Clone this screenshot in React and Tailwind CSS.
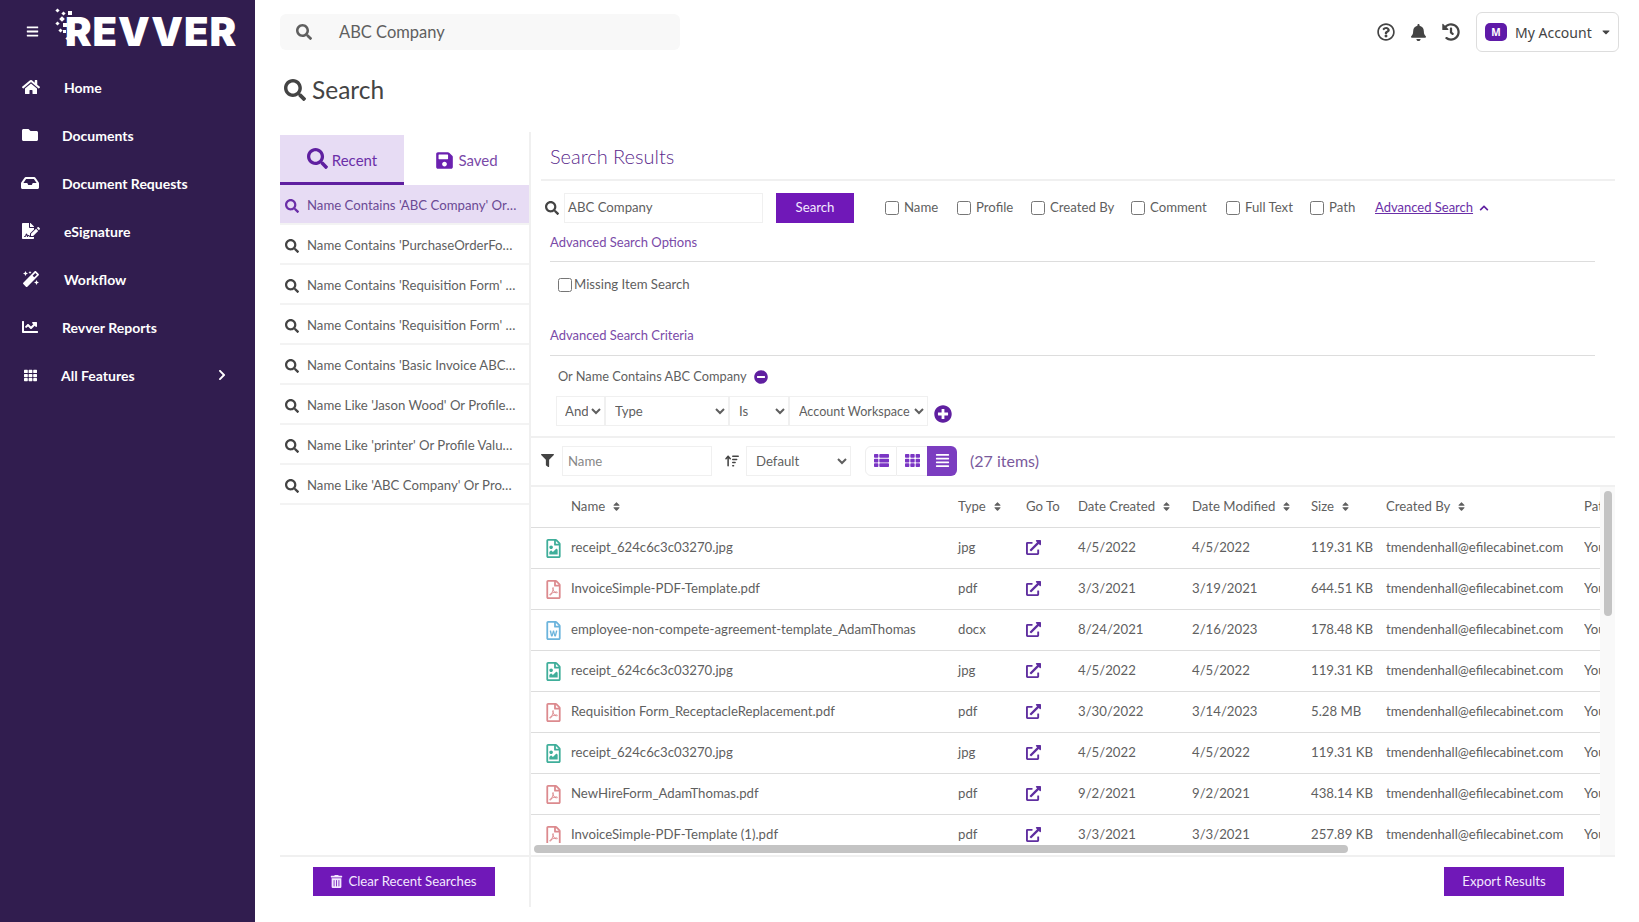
import { FaBars, FaHome, FaFolder, FaInbox, FaFileSignature, FaMagic, FaChartLine, FaTh, FaChevronRight, FaChevronUp, FaSearch, FaSave, FaTrashAlt, FaMinusCircle, FaPlusCircle, FaFilter, FaThList, FaAlignJustify, FaExternalLinkAlt, FaRegQuestionCircle, FaBell, FaHistory, FaSort, FaRegFileImage, FaRegFilePdf, FaRegFileWord, FaCaretDown } from 'react-icons/fa';
import { FaArrowUpWideShort } from 'react-icons/fa6';

const navItems = [
  { label: 'Home', icon: FaHome, pad: 'ml-[22px]' },
  { label: 'Documents', icon: FaFolder, pad: 'ml-[21px]' },
  { label: 'Document Requests', icon: FaInbox, pad: 'ml-[21px]' },
  { label: 'eSignature', icon: FaFileSignature, pad: 'ml-[22px]' },
  { label: 'Workflow', icon: FaMagic, pad: 'ml-[22px]' },
  { label: 'Revver Reports', icon: FaChartLine, pad: 'ml-[21px]' },
];

const recent = [
  "Name Contains 'ABC Company' Or Name Contains 'Invoice'",
  "Name Contains 'PurchaseOrderForm' Or Profile Value",
  "Name Contains 'Requisition Form' Or Profile Value",
  "Name Contains 'Requisition Form' Or Comment",
  "Name Contains 'Basic Invoice ABC Company'",
  "Name Like 'Jason Wood' Or Profile Value Contains",
  "Name Like 'printer' Or Profile Value Contains",
  "Name Like 'ABC Company' Or Profile Value Contains",
];

const columns = [
  { label: 'Name', sort: true },
  { label: 'Type', sort: true },
  { label: 'Go To' },
  { label: 'Date Created', sort: true },
  { label: 'Date Modified', sort: true },
  { label: 'Size', sort: true },
  { label: 'Created By', sort: true },
];

const files = [
  ['receipt_624c6c3c03270.jpg', 'jpg', '4/5/2022', '4/5/2022', '119.31 KB'],
  ['InvoiceSimple-PDF-Template.pdf', 'pdf', '3/3/2021', '3/19/2021', '644.51 KB'],
  ['employee-non-compete-agreement-template_AdamThomas', 'docx', '8/24/2021', '2/16/2023', '178.48 KB'],
  ['receipt_624c6c3c03270.jpg', 'jpg', '4/5/2022', '4/5/2022', '119.31 KB'],
  ['Requisition Form_ReceptacleReplacement.pdf', 'pdf', '3/30/2022', '3/14/2023', '5.28 MB'],
  ['receipt_624c6c3c03270.jpg', 'jpg', '4/5/2022', '4/5/2022', '119.31 KB'],
  ['NewHireForm_AdamThomas.pdf', 'pdf', '9/2/2021', '9/2/2021', '438.14 KB'],
  ['InvoiceSimple-PDF-Template (1).pdf', 'pdf', '3/3/2021', '3/3/2021', '257.89 KB'],
];

const gridCols = 'grid grid-cols-[40px_387px_68px_52px_114px_119px_75px_198px_100px]';

const FileIcon = ({ type }) => {
  if (type === 'pdf') return <FaRegFilePdf className="text-[19px] text-[#dc8a8e]" />;
  if (type === 'docx') return <FaRegFileWord className="text-[19px] text-[#6cb4dc]" />;
  return <FaRegFileImage className="text-[19px] text-[#3fae9a]" />;
};

const Check = ({ label, className }) => (
  <label className={`flex shrink-0 items-center gap-[5px] ${className}`}>
    <input type="checkbox" className="h-[14px] w-[14px]" />
    <span>{label}</span>
  </label>
);

const App = () => {
  return (
    <div className="flex h-screen w-full overflow-hidden bg-white font-['Lato',sans-serif] text-[13.2px] text-[#5f5f5f]">
      <aside className="flex w-[255px] shrink-0 flex-col bg-[#311d4f] text-[14px] text-white">
        <div className="flex h-[63px] items-center">
          <FaBars className="ml-[26px] text-[13px]" />
          <div className="relative ml-[16px] pl-[10px] font-['Inter',sans-serif] text-[40px] font-black leading-none tracking-[0.9px]">
            REVVER
            <svg className="absolute left-0 top-[-4px] h-[36px] w-[24px]" viewBox="0 0 24 36" fill="#fff">
              <rect x="1" y="1" width="3" height="3" transform="rotate(45 2.5 2.5)" />
              <rect x="7" y="4" width="3" height="3" transform="rotate(45 8.5 5.5)" />
              <rect x="13" y="3" width="4" height="4" />
              <rect x="5" y="9" width="4" height="4" transform="rotate(45 7 11)" />
              <rect x="1" y="14" width="3" height="3" transform="rotate(45 2.5 15.5)" />
              <rect x="8" y="15" width="4" height="4" />
              <rect x="4" y="21" width="3" height="3" transform="rotate(45 5.5 22.5)" />
              <rect x="8" y="22" width="3" height="3" />
              <rect x="11" y="29" width="3" height="3" transform="rotate(45 12.5 30.5)" />
            </svg>
          </div>
        </div>
        <nav className="flex flex-col font-bold">
          {navItems.map((item) => (
            <div key={item.label} className="flex h-[48px] items-center">
              <item.icon className={`${item.pad} w-[18px] text-[16px]`} />
              <span className={item.pad === 'ml-[22px]' ? 'ml-[24px]' : 'ml-[23px]'}>{item.label}</span>
            </div>
          ))}
          <div className="flex h-[48px] items-center">
            <FaTh className="ml-[24px] text-[13px]" />
            <span className="ml-[24px]">All Features</span>
            <FaChevronRight className="ml-[81px] text-[12px]" />
          </div>
        </nav>
      </aside>

      <main className="flex min-w-0 flex-1 flex-col pl-[25px] pr-[20px]">
        <div className="flex h-[64px] shrink-0 items-center">
          <div className="flex h-[36px] w-[400px] items-center rounded-md bg-[#f8f8f8] pl-[16px] text-[16.5px]">
            <FaSearch className="text-[16px]" />
            <span className="ml-[27px]">ABC Company</span>
          </div>
          <div className="ml-auto flex items-center">
            <FaRegQuestionCircle className="text-[18px] text-[#444]" />
            <FaBell className="ml-[15px] text-[17px] text-[#444]" />
            <FaHistory className="ml-[15px] text-[18px] text-[#444]" />
            <div className="ml-[16px] flex h-[40px] w-[143px] items-center rounded-md border border-[#ddd] pl-[8px] font-['Noto_Sans',sans-serif] text-[14px] text-[#444]">
              <span className="flex h-[18px] w-[22px] items-center justify-center rounded-[5px] bg-[#5f1aa8] text-[10px] font-bold text-white">M</span>
              <span className="ml-[8px]">My Account</span>
              <FaCaretDown className="ml-auto mr-[6px] text-[12px]" />
            </div>
          </div>
        </div>

        <div className="flex h-[68px] shrink-0 items-start pl-[4px] pt-[8px] text-[24.5px] text-[#444]">
          <FaSearch className="mt-[7px] text-[22px]" />
          <span className="ml-[6px]">Search</span>
        </div>

        <div className="flex h-[775px] min-h-0">
          <section className="flex w-[251px] shrink-0 flex-col border-r-2 border-[#f0f0f0] pt-[3px]">
            <div className="flex h-[50px] shrink-0 text-[15px]">
              <div className="flex w-[124px] items-center justify-center gap-[4px] border-b-[3px] border-[#5f1fa0] bg-[#e7dcf4] pt-[3px] text-[#6b2fa8]">
                <FaSearch className="mb-[3px] text-[21px] text-[#5f1fa0]" />
                <span>Recent</span>
              </div>
              <div className="flex w-[125px] items-center justify-center gap-[4px] text-[#7a4aa8]">
                <FaSave className="text-[19px] text-[#6b21b0]" />
                <span>Saved</span>
              </div>
            </div>
            <div className="flex-1">
              {recent.map((item, i) => (
                <div key={item} className={`flex h-[40px] items-center border-b-2 border-[#f3f3f3] pl-[5px] pt-[3px] ${i === 0 ? 'bg-[#e7dcf4] text-[#6b4a94]' : ''}`}>
                  <FaSearch className={`shrink-0 text-[14px] ${i === 0 ? 'text-[#6b2fa8]' : 'text-[#444]'}`} />
                  <span className="ml-[8px] w-[210px] truncate">{item}</span>
                </div>
              ))}
            </div>
            <div className="flex h-[52px] shrink-0 items-start justify-center border-t-2 border-[#f0f0f0] pr-[2px] pt-[10px]">
              <button className="flex h-[29px] w-[182px] items-center justify-center gap-[5px] bg-[#7018b8] text-[#f3e8ff]">
                <FaTrashAlt className="text-[13px]" />
                Clear Recent Searches
              </button>
            </div>
          </section>

          <section className="mr-[4px] flex min-w-0 flex-1 flex-col">
            <div className="ml-[10px] flex h-[49px] shrink-0 items-center border-b-2 border-[#f0f0f0] pl-[9px] text-[20px] font-light text-[#5b2a8c]">
              Search Results
            </div>

            <div className="mt-[12px] flex h-[30px] shrink-0 items-center">
              <FaSearch className="ml-[14px] text-[14px] text-[#444]" />
              <div className="ml-[5px] flex h-[30px] w-[199px] items-center border border-[#f0f0f0] pl-[3px]">ABC Company</div>
              <button className="ml-[13px] h-[30px] w-[78px] bg-[#7018b8] text-[#f3e8ff]">Search</button>
              <Check label="Name" className="ml-[31px] w-[72px]" />
              <Check label="Profile" className="w-[74px]" />
              <Check label="Created By" className="w-[100px]" />
              <Check label="Comment" className="w-[95px]" />
              <Check label="Full Text" className="w-[84px]" />
              <Check label="Path" className="w-[65px]" />
              <span className="text-[13px] text-[#6b2fa8] underline">Advanced Search</span>
              <FaChevronUp className="ml-[6px] text-[10px] text-[#5f1fa0]" />
            </div>

            <div className="ml-[19px] mr-[20px] mt-[8px] flex h-[31px] shrink-0 items-center border-b border-[#ddd] pb-[6px] text-[13px] text-[#7a4aa8]">Advanced Search Options</div>
            <label className="ml-[27px] mt-[12px] flex h-[22px] shrink-0 items-center gap-[2px]">
              <input type="checkbox" className="h-[14px] w-[14px]" />
              Missing Item Search
            </label>
            <div className="ml-[19px] mr-[20px] mt-[28px] flex h-[32px] shrink-0 items-center border-b border-[#ddd] pb-[7px] text-[13px] text-[#7a4aa8]">Advanced Search Criteria</div>
            <div className="ml-[27px] mt-[10px] flex h-[22px] shrink-0 items-center text-[12.8px]">
              Or Name Contains ABC Company
              <FaMinusCircle className="ml-[7px] text-[14px] text-[#5f1fa0]" />
            </div>
            <div className="ml-[25px] mt-[8px] flex h-[30px] shrink-0 items-center">
              <select defaultValue="And" className="h-[30px] w-[49px] border border-[#f0f0f0] pl-[4px]"><option>And</option><option>Or</option></select>
              <select defaultValue="Type" className="h-[30px] w-[124px] border border-[#f0f0f0] pl-[5px]"><option>Type</option><option>Name</option></select>
              <select defaultValue="Is" className="h-[30px] w-[60px] border border-[#f0f0f0] pl-[5px]"><option>Is</option></select>
              <select defaultValue="Account Workspace" className="h-[30px] w-[139px] border border-[#f0f0f0] pl-[5px] text-[12.6px]"><option>Account Workspace</option></select>
              <FaPlusCircle className="ml-[6px] mt-[5px] text-[18px] text-[#5f1fa0]" />
            </div>

            <div className="mt-[10px] flex h-[51px] shrink-0 items-center border-y-[2px] border-[#f0f0f0] pb-[2px]">
              <FaFilter className="ml-[10px] text-[13px] text-[#444]" />
              <input placeholder="Name" className="ml-[8px] h-[30px] w-[150px] border border-[#f0f0f0] pl-[5px] outline-none placeholder:text-[#888]" />
              <FaArrowUpWideShort className="ml-[13px] text-[14px] text-[#444]" />
              <select defaultValue="Default" className="ml-[7px] h-[30px] w-[105px] border border-[#f0f0f0] pl-[5px]"><option>Default</option></select>
              <div className="ml-[14px] flex h-[30px] w-[92px] text-[15px] text-[#7a35c4]">
                <div className="flex w-[32px] items-center justify-center rounded-l-md border border-[#eee]"><FaThList /></div>
                <div className="flex w-[30px] items-center justify-center border-y border-[#eee]"><FaTh /></div>
                <div className="flex w-[30px] items-center justify-center rounded-r-md bg-[#7b3dc0] text-white"><FaAlignJustify /></div>
              </div>
              <span className="ml-[13px] text-[16px] text-[#7a5a9c]">(27 items)</span>
            </div>

            <div className="flex min-h-0 flex-1">
              <div className="flex min-w-0 flex-1 flex-col">
                <div className="min-h-0 flex-1 overflow-hidden">
                  <div className={`${gridCols} h-[41px] items-center border-b border-[#ddd]`}>
                    <div />
                    {columns.map((col) => (
                      <div key={col.label} className="flex items-center gap-[6px] whitespace-nowrap">
                        {col.label}
                        {col.sort && <FaSort className="text-[11px]" />}
                      </div>
                    ))}
                    <div className="whitespace-nowrap">Path</div>
                  </div>
                  {files.map((file, i) => (
                    <div key={i} className={`${gridCols} h-[41px] items-center border-b border-[#ddd]`}>
                      <div className="flex pl-[13px]"><FileIcon type={file[1]} /></div>
                      <div className="whitespace-nowrap">{file[0]}</div>
                      <div>{file[1]}</div>
                      <div className="pb-[2px]"><FaExternalLinkAlt className="text-[15px] text-[#5f2ea0]" /></div>
                      <div>{file[2]}</div>
                      <div>{file[3]}</div>
                      <div>{file[4]}</div>
                      <div className="whitespace-nowrap">tmendenhall@efilecabinet.com</div>
                      <div className="overflow-hidden whitespace-nowrap">Your Workspace</div>
                    </div>
                  ))}
                </div>
                <div className="h-[12px] shrink-0 pl-[3px] pt-[2px]">
                  <div className="h-[8px] w-[814px] rounded-full bg-[#c4c4c4]" />
                </div>
              </div>
              <div className="w-[15px] shrink-0 bg-[#f9f9f9] pl-[4px] pt-[4px]">
                <div className="h-[125px] w-[8px] rounded-full bg-[#c4c4c4]" />
              </div>
            </div>

            <div className="flex h-[52px] shrink-0 items-start justify-end border-t-2 border-[#f0f0f0] pr-[51px] pt-[10px]">
              <button className="h-[29px] w-[120px] bg-[#7018b8] text-[#f3e8ff]">Export Results</button>
            </div>
          </section>
        </div>
      </main>
    </div>
  );
};

export default App;
